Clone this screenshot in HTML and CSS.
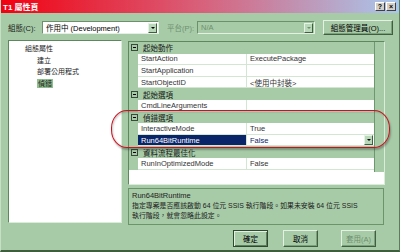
FILE: index.html
```html
<html>

<head>
    <title>T1 屬性頁</title>
    <link rel="stylesheet" href="styles.css">
</head>

<body>
    <div class="window">
        <div class="titlebar">
            <span class="title">T1 屬性頁</span>
            <div class="caption-btns">
                <span class="cap-btn">?</span>
                <span class="cap-btn">×</span>
            </div>
        </div>

        <div class="toolbar">
            <span class="lbl">組態(C):</span>
            <div class="combo config">
                <span class="combo-text">作用中 (Development)</span>
                <span class="drop"><span class="arrow"></span></span>
            </div>
            <span class="lbl disabled platform-lbl">平台(P):</span>
            <div class="combo platform disabled">
                <span class="combo-text">N/A</span>
                <span class="drop"><span class="arrow"></span></span>
            </div>
            <div class="btn manager">組態管理員(O)...</div>
        </div>

        <div class="main">
            <div class="tree">
                <div class="tree-item level1">組態屬性</div>
                <div class="tree-item level2">建立</div>
                <div class="tree-item level2">部署公用程式</div>
                <div class="tree-item level2"><span class="tree-sel">偵錯</span></div>
            </div>

            <div class="props-col">
                <div class="grid">
                    <div class="rows">
                        <div class="cat"><span class="toggle"></span>起始動作</div>
                        <div class="prop"><span class="name">StartAction</span><span class="value">ExecutePackage</span></div>
                        <div class="prop"><span class="name">StartApplication</span><span class="value"></span></div>
                        <div class="prop"><span class="name">StartObjectID</span><span class="value">&lt;使用中封裝&gt;</span></div>
                        <div class="cat"><span class="toggle"></span>起始選項</div>
                        <div class="prop"><span class="name">CmdLineArguments</span><span class="value"></span></div>
                        <div class="cat"><span class="toggle"></span>偵錯選項</div>
                        <div class="prop"><span class="name">InteractiveMode</span><span class="value">True</span></div>
                        <div class="prop selected"><span class="name">Run64BitRuntime</span><span class="value">False<span class="drop small"><span class="arrow"></span></span></span></div>
                        <div class="cat"><span class="toggle"></span>資料流程最佳化</div>
                        <div class="prop"><span class="name">RunInOptimizedMode</span><span class="value">False</span></div>
                    </div>
                    <div class="scroll"></div>
                </div>
                <div class="desc">
                    <div class="desc-title">Run64BitRuntime</div>
                    <div class="desc-text">指定專案是否應該啟動 64 位元 SSIS 執行階段。如果未安裝 64 位元 SSIS<br>執行階段，就會忽略此設定。</div>
                </div>
            </div>
        </div>

        <div class="footer">
            <div class="btn default">確定</div>
            <div class="btn cancel">取消</div>
            <div class="btn disabled apply">套用(A)</div>
        </div>

        <!-- red annotation drawn over the debug options -->
        <div class="highlight"></div>
    </div>
</body>

</html>
```

FILE: styles.css
```css
body {
    margin: 0;
    padding: 0;
    font-family: "Liberation Sans", "Noto Sans CJK TC", sans-serif;
    font-size: 7.5px;
    color: #000;
}

.window {
    position: relative;
    width: 400px;
    height: 252px;
    box-sizing: border-box;
    background: #a7cba7;
    border-left: 1px solid #c6e0c6;
    border-right: 1px solid #5a7d5a;
    border-bottom: 2px solid #3e5e3e;
    overflow: hidden;
}

.titlebar {
    height: 13px;
    margin-left: -1px;
    margin-right: -1px;
    background: linear-gradient(to right, #f20010, #d8607a 50%, #a8c8ee);
    display: flex;
    align-items: center;
    justify-content: space-between;
}

.title {
    color: white;
    font-weight: bold;
    font-size: 8px;
    padding-left: 3px;
}

.caption-btns {
    display: flex;
    gap: 1px;
    padding-right: 4px;
}

.cap-btn {
    width: 8px;
    height: 7px;
    background: #d4d0c8;
    border-top: 1px solid #fff;
    border-left: 1px solid #fff;
    border-right: 1px solid #404040;
    border-bottom: 1px solid #404040;
    font-size: 7px;
    font-weight: bold;
    line-height: 7px;
    text-align: center;
}

.toolbar {
    height: 27px;
    display: flex;
    align-items: center;
    padding-left: 7px;
    padding-top: 2px;
    box-sizing: border-box;
}

.lbl {
    width: 34px;
    color: #1a1a1a;
}

.disabled {
    color: #6f8f6f;
}

.platform-lbl {
    margin-left: 8px;
    width: 30px;
}

.combo {
    height: 13px;
    box-sizing: border-box;
    background: white;
    border-top: 1px solid #6c8f6c;
    border-left: 1px solid #6c8f6c;
    border-right: 1px solid #e4f0e4;
    border-bottom: 1px solid #e4f0e4;
    display: flex;
    align-items: center;
    justify-content: space-between;
}

.config {
    width: 117px;
}

.platform {
    width: 118px;
    background: #a7cba7;
}

.combo-text {
    padding-left: 3px;
}

.drop {
    width: 9px;
    height: 10px;
    box-sizing: border-box;
    background: #b9d7b9;
    border-top: 1px solid #e6f2e6;
    border-left: 1px solid #e6f2e6;
    border-right: 1px solid #3f5f3f;
    border-bottom: 1px solid #3f5f3f;
    margin-right: 1px;
    display: flex;
    align-items: center;
    justify-content: center;
}

.arrow {
    width: 0;
    height: 0;
    border-left: 2px solid transparent;
    border-right: 2px solid transparent;
    border-top: 2px solid #000;
}

.platform .arrow {
    border-top-color: #6f8f6f;
}

.btn {
    box-sizing: border-box;
    background: #a7cba7;
    border-top: 1px solid #e4f0e4;
    border-left: 1px solid #e4f0e4;
    border-right: 1px solid #3f5f3f;
    border-bottom: 1px solid #3f5f3f;
    box-shadow: inset -1px -1px 0 #7c9f7c;
    display: flex;
    align-items: center;
    justify-content: center;
}

.manager {
    width: 70px;
    height: 15px;
    margin-left: 8px;
    margin-top: -1px;
}

.main {
    display: flex;
    height: 185px;
    padding-left: 7px;
}

.tree {
    width: 114px;
    height: 183px;
    box-sizing: border-box;
    background: white;
    border-top: 1px solid #5f875f;
    border-left: 1px solid #5f875f;
    border-right: 1px solid #dcecdc;
    border-bottom: 1px solid #dcecdc;
    padding-top: 2px;
    font-size: 7px;
}

.tree-item {
    height: 11.6px;
    line-height: 11.6px;
    color: #222;
}

.level1 {
    padding-left: 16px;
}

.level2 {
    padding-left: 28px;
}

.tree-sel {
    background: #90c090;
    padding: 1px 1px;
}

.props-col {
    width: 257px;
    margin-left: 6px;
    margin-top: 1px;
    display: flex;
    flex-direction: column;
}

.grid {
    height: 144px;
    box-sizing: border-box;
    background: white;
    border-top: 1px solid #5f875f;
    border-left: 1px solid #5f875f;
    border-right: 1px solid #dcecdc;
    border-bottom: 1px solid #dcecdc;
    display: flex;
}

.rows {
    width: 245px;
}

.scroll {
    flex: 1;
    height: 130px;
    background: #a7cba7;
    border-left: 1px solid #6f976f;
}

.cat {
    height: 11.6px;
    box-sizing: border-box;
    background: #a7cba7;
    display: flex;
    align-items: center;
    padding-left: 2px;
    color: #1a1a1a;
}

.toggle {
    position: relative;
    width: 7px;
    height: 7px;
    box-sizing: border-box;
    border: 1px solid #3a4a3a;
    margin-right: 5px;
    background: #a7cba7;
}

.toggle::after {
    content: "";
    position: absolute;
    left: 1px;
    top: 2px;
    width: 3px;
    height: 1px;
    background: #000;
}

.prop {
    height: 11.6px;
    box-sizing: border-box;
    display: flex;
    padding-left: 9px;
    background: #a7cba7;
}

.name,
.value {
    background: white;
    border-bottom: 1px solid #d2e6d2;
    display: flex;
    align-items: center;
    padding-left: 3px;
    box-sizing: border-box;
    color: #333;
}

.name {
    width: 109px;
    border-right: 1px solid #d2e6d2;
}

.value {
    flex: 1;
    justify-content: space-between;
}

.selected .name {
    background: #0a246a;
    color: white;
}

.selected .value {
    color: #0a246a;
}

.small {
    height: 10px;
    width: 9px;
}

.desc {
    margin-top: 3px;
    height: 37px;
    width: 256px;
    box-sizing: border-box;
    border: 1px solid #6a946a;
    padding: 2px 3px;
    line-height: 10px;
    color: #222;
}

.desc-text {
    font-size: 6.9px;
    white-space: nowrap;
}

.footer {
    display: flex;
    height: 17px;
    margin-top: 5px;
    padding-left: 232px;
}

.footer .btn {
    width: 35px;
    height: 17px;
}

.default {
    border: 1px solid #2e4a2e;
    box-shadow: inset 1px 1px 0 #e4f0e4, inset -1px -1px 0 #5f7f5f;
}

.cancel {
    margin-left: 15px;
}

.apply {
    margin-left: 23px;
    width: 37px;
}

.highlight {
    position: absolute;
    left: 110px;
    top: 110px;
    width: 277px;
    height: 36px;
    border: 1.5px solid #cc1020;
    border-radius: 16px / 18px;
    box-shadow: 1px 2px 2px rgba(40, 40, 40, 0.35), inset 1px 1px 2px rgba(40, 40, 40, 0.25);
}
```
